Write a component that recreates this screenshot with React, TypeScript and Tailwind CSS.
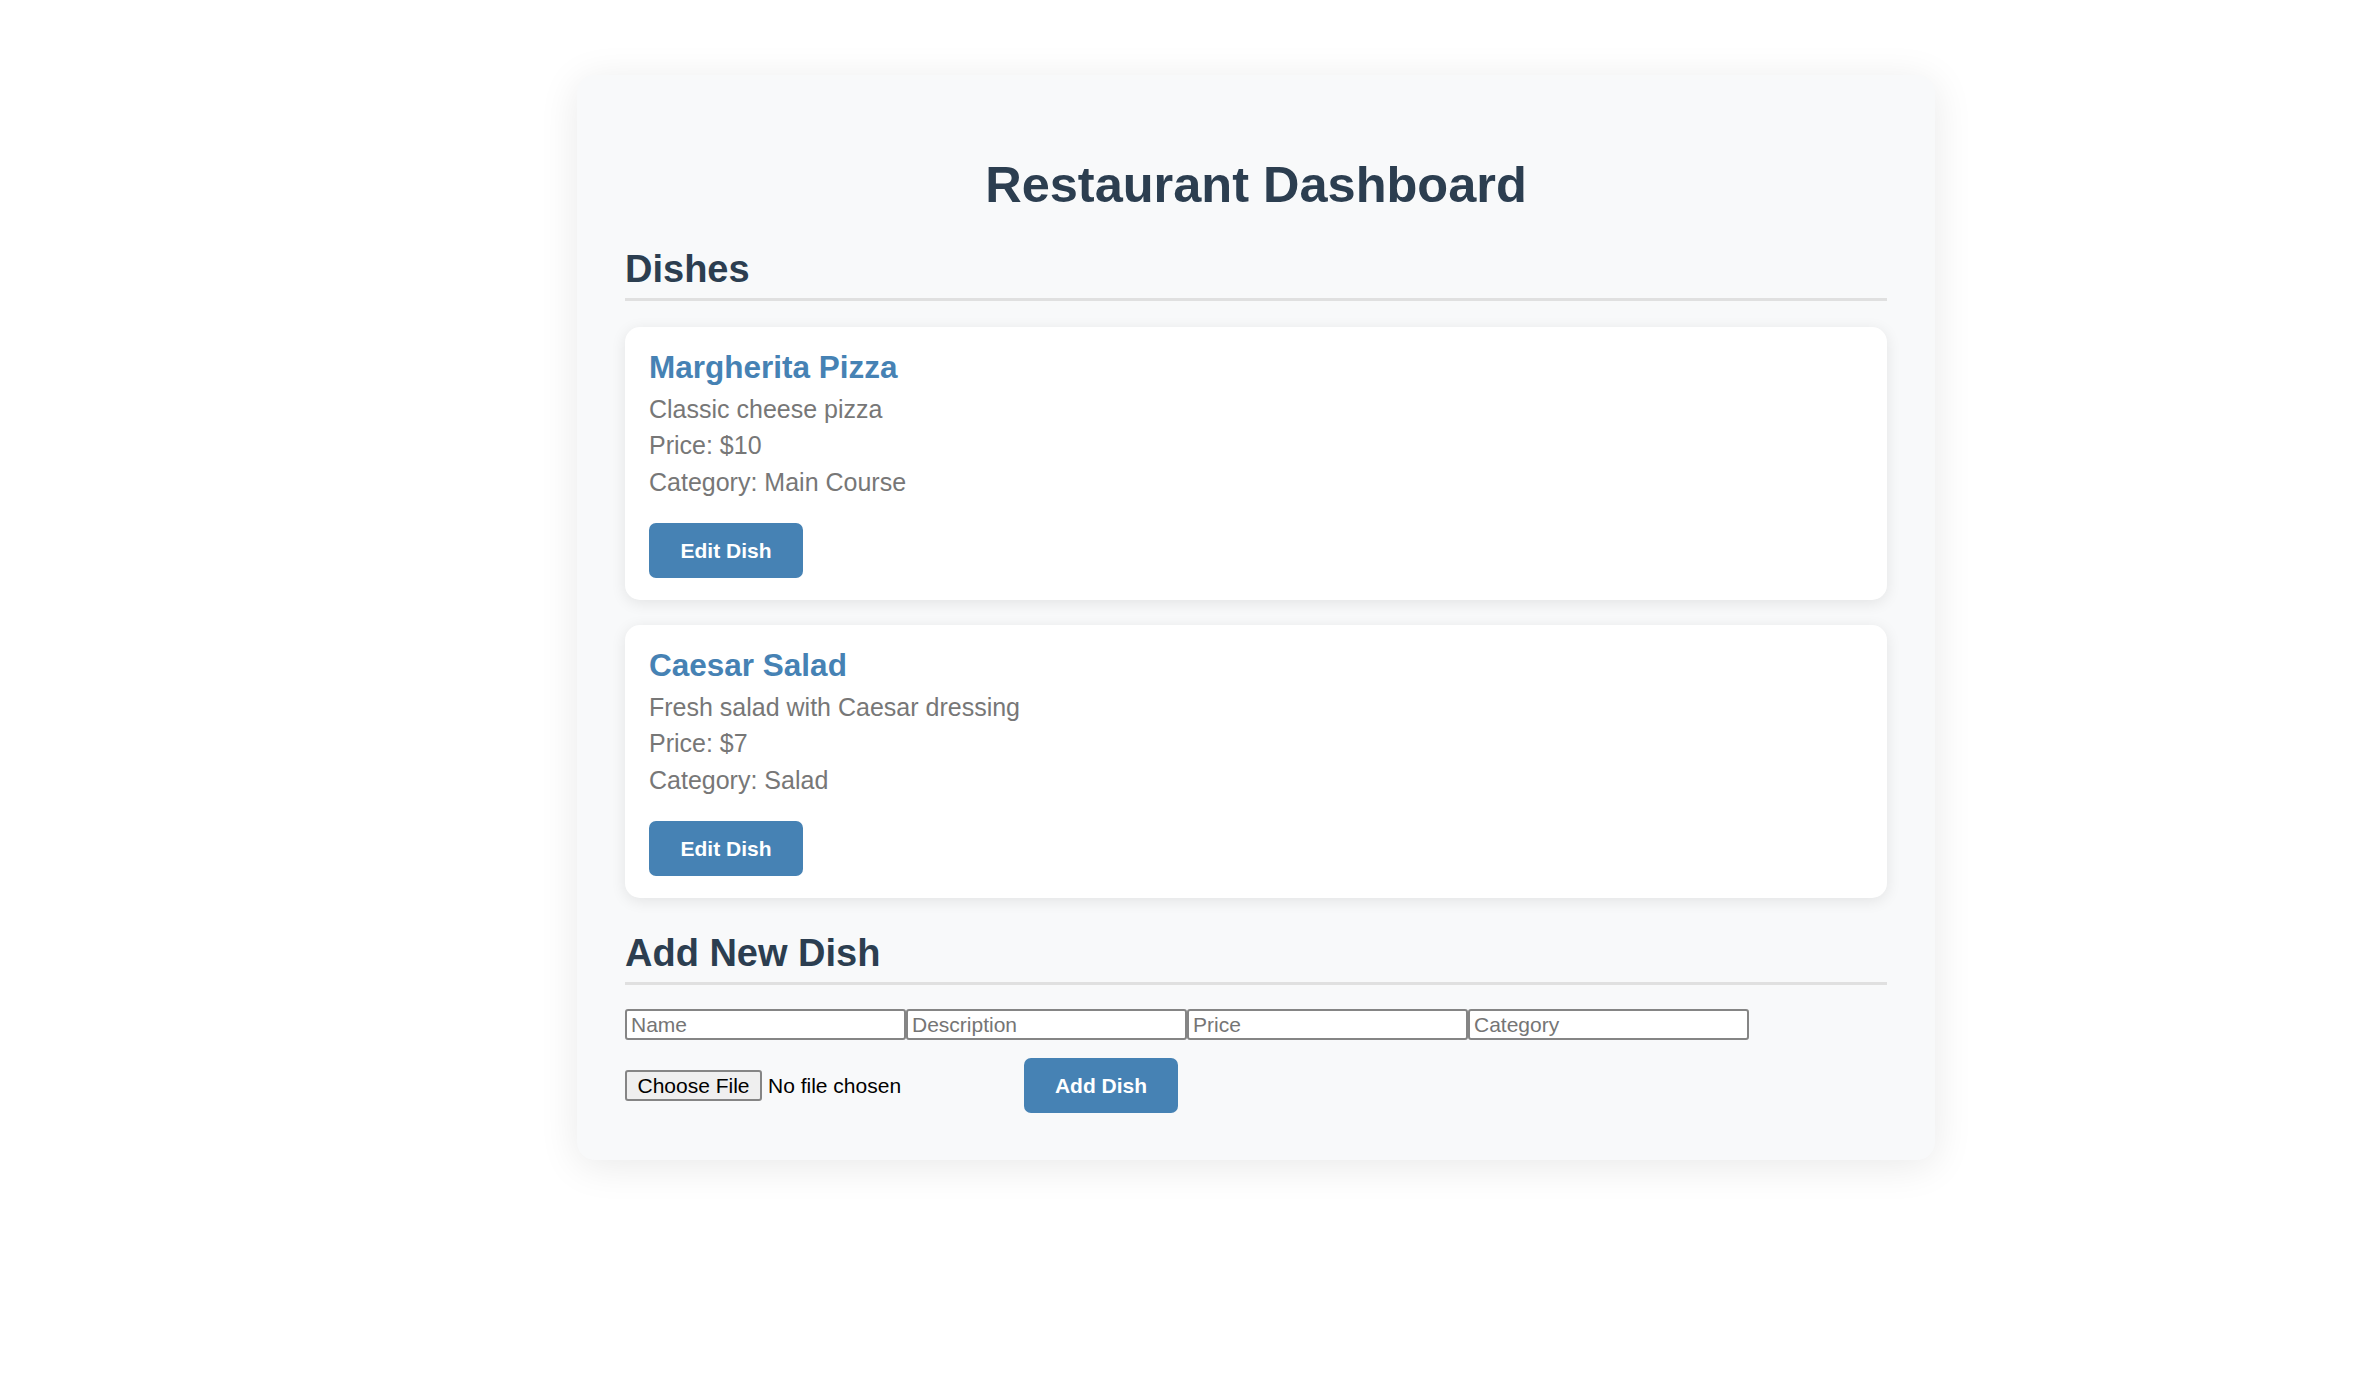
import React from "react";

type Dish = { name: string; description: string; price: number; category: string };

const dishes: Dish[] = [
  { name: "Margherita Pizza", description: "Classic cheese pizza", price: 10, category: "Main Course" },
  { name: "Caesar Salad", description: "Fresh salad with Caesar dressing", price: 7, category: "Salad" },
];

function DishCard({ dish }: { dish: Dish }) {
  return (
    <div className="rounded-[15px] bg-white px-[24px] pt-[22px] pb-[22px] shadow-[0_3px_15px_rgba(0,0,0,0.09)]">
      <h3 className="text-[31.5px] leading-[36px] font-bold text-[#4682b4]">{dish.name}</h3>
      <p className="mt-[10px] text-[25px] leading-[28px] text-[#777777]">{dish.description}</p>
      <p className="mt-[8px] text-[25px] leading-[28px] text-[#777777]">Price: ${dish.price}</p>
      <p className="mt-[9px] text-[25px] leading-[28px] text-[#777777]">Category: {dish.category}</p>
      <button className="mt-[27px] flex h-[55px] w-[154px] items-center justify-center rounded-[7px] bg-[#4682b4] text-[21px] font-bold text-white">
        Edit Dish
      </button>
    </div>
  );
}

export default function App() {
  const fields = ["Name", "Description", "Price", "Category"];
  return (
    <div className="min-h-screen bg-white pt-[75px] font-['Liberation_Sans',Arial,sans-serif]">
      <div className="ml-[577px] w-[1358px] rounded-[18px] bg-[#f8f9fa] px-[48px] pt-[81px] pb-[47px] shadow-[0_6px_40px_rgba(0,0,0,0.09)]">
        <h1 className="text-center text-[50.5px] leading-[58px] font-bold text-[#2c3e50]">Restaurant Dashboard</h1>

        <h2 className="mt-[33px] border-b-[3px] border-[#e0e0e0] pb-[7px] text-[38px] leading-[44px] font-bold text-[#2c3e50]">
          Dishes
        </h2>

        <div className="mt-[26px] flex flex-col gap-[25px]">
          {dishes.map((d) => (
            <DishCard key={d.name} dish={d} />
          ))}
        </div>

        <h2 className="mt-[33px] border-b-[3px] border-[#e0e0e0] pb-[7px] text-[38px] leading-[44px] font-bold text-[#2c3e50]">
          Add New Dish
        </h2>

        <div className="mt-[24px] flex">
          {fields.map((f) => (
            <input
              key={f}
              type="text"
              placeholder={f}
              className="h-[31px] w-[281px] rounded-[3px] border-2 border-[#858585] bg-white px-[4px] text-[21px] text-black placeholder:text-[#757575] outline-none"
            />
          ))}
        </div>

        <div className="mt-[18px] flex h-[55px] items-center">
          <div className="flex w-[399px] items-center">
            <div className="flex h-[31px] w-[137px] items-center justify-center rounded-[3px] border-2 border-[#858585] bg-[#efefef] text-[21px] text-black">
              Choose File
            </div>
            <span className="ml-[6px] text-[21px] text-black">No file chosen</span>
          </div>
          <button className="flex h-[55px] w-[154px] items-center justify-center rounded-[7px] bg-[#4682b4] text-[21px] font-bold text-white">
            Add Dish
          </button>
        </div>
      </div>
    </div>
  );
}
